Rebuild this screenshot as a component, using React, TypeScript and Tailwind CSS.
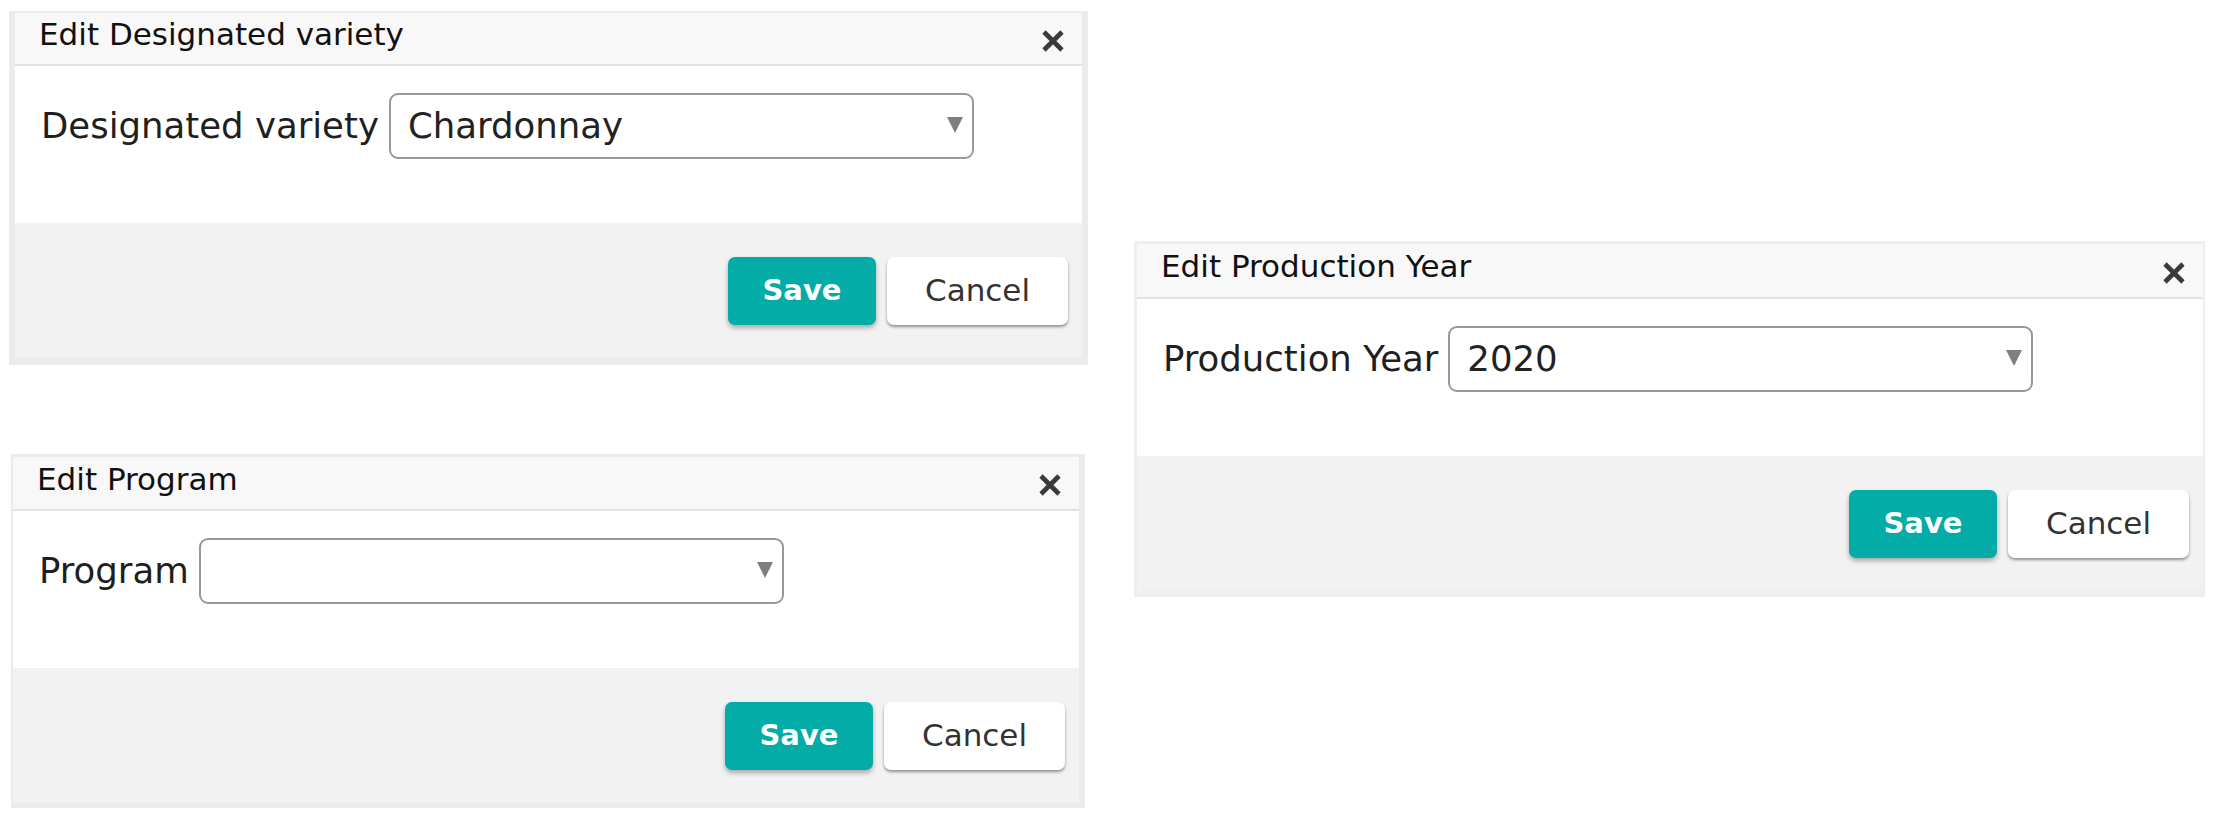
const font = { fontFamily: '"DejaVu Sans", "Liberation Sans", sans-serif' };

type DialogProps = {
  title: string;
  label: string;
  value: string;
  frame: string;
  header: string;
};

function CloseIcon() {
  return (
    <svg width="22" height="22" viewBox="0 0 22 22" className="shrink-0 mt-[4px]">
      <path d="M2 2 L20 20 M20 2 L2 20" stroke="#3a3a3a" strokeWidth="4.6" strokeLinecap="butt" />
    </svg>
  );
}

function Dialog({ title, label, value, frame, header }: DialogProps) {
  return (
    <div className={`flex flex-col bg-white border-solid ${frame}`} style={font}>
      <div
        className={`flex items-center justify-between bg-[#f8f8f8] border-b-2 border-[#e2e2e2] pl-[24px] pr-[18px] ${header}`}
      >
        <span className="text-[31px] leading-none text-[#111] pb-[8px]">{title}</span>
        <CloseIcon />
      </div>

      <div className="h-[157px] pl-[26px] pt-[27px]">
        <div className="flex items-center gap-[10px]">
          <span className="text-[35.5px] leading-none text-[#1f1f1f]">{label}</span>
          <div className="relative flex items-center w-[585px] h-[66px] border-2 border-[#999] rounded-[9px] pl-[17px]">
            <span className="text-[35.5px] leading-none text-[#222]">{value}</span>
            <svg width="16" height="16" viewBox="0 0 16 16" className="absolute right-[9px] top-[22px]">
              <polygon points="0,0 16,0 8,16" fill="#7f7f7f" />
            </svg>
          </div>
        </div>
      </div>

      <div className="h-[135px] bg-[#f2f2f2] flex items-center justify-end gap-[11px] pr-[14px]">
        <button className="w-[148px] h-[68px] rounded-[7px] bg-[#03aca6] text-white text-[29px] font-semibold shadow-[0_3px_5px_rgba(0,0,0,0.3)]">
          Save
        </button>
        <button className="w-[181px] h-[68px] rounded-[7px] bg-white text-[#333] text-[31px] shadow-[0_2px_3px_rgba(0,0,0,0.4)]">
          Cancel
        </button>
      </div>
    </div>
  );
}

export default function App() {
  return (
    <div className="w-[2221px] h-[825px] bg-white flex items-start overflow-hidden">
      <div className="flex flex-col pt-[11px] pl-[9px] gap-[89px]">
        <div className="w-[1079px]">
          <Dialog
            title="Edit Designated variety"
            label="Designated variety"
            value="Chardonnay"
            frame="border-[#ebebeb] border-l-[6px] border-r-[6px] border-t-[2px] border-b-[7px]"
            header="h-[53px]"
          />
        </div>
        <div className="w-[1074px] ml-[2px]">
          <Dialog
            title="Edit Program"
            label="Program"
            value=""
            frame="border-[#ebebeb] border-l-[2px] border-r-[6px] border-t-[3px] border-b-[5px]"
            header="h-[54px]"
          />
        </div>
      </div>

      <div className="w-[1071px] ml-[46px] mt-[241px]">
        <Dialog
          title="Edit Production Year"
          label="Production Year"
          value="2020"
          frame="border-[#eeeeee] border-l-[3px] border-r-[2px] border-t-[3px] border-b-[6px]"
          header="h-[55px]"
        />
      </div>
    </div>
  );
}
